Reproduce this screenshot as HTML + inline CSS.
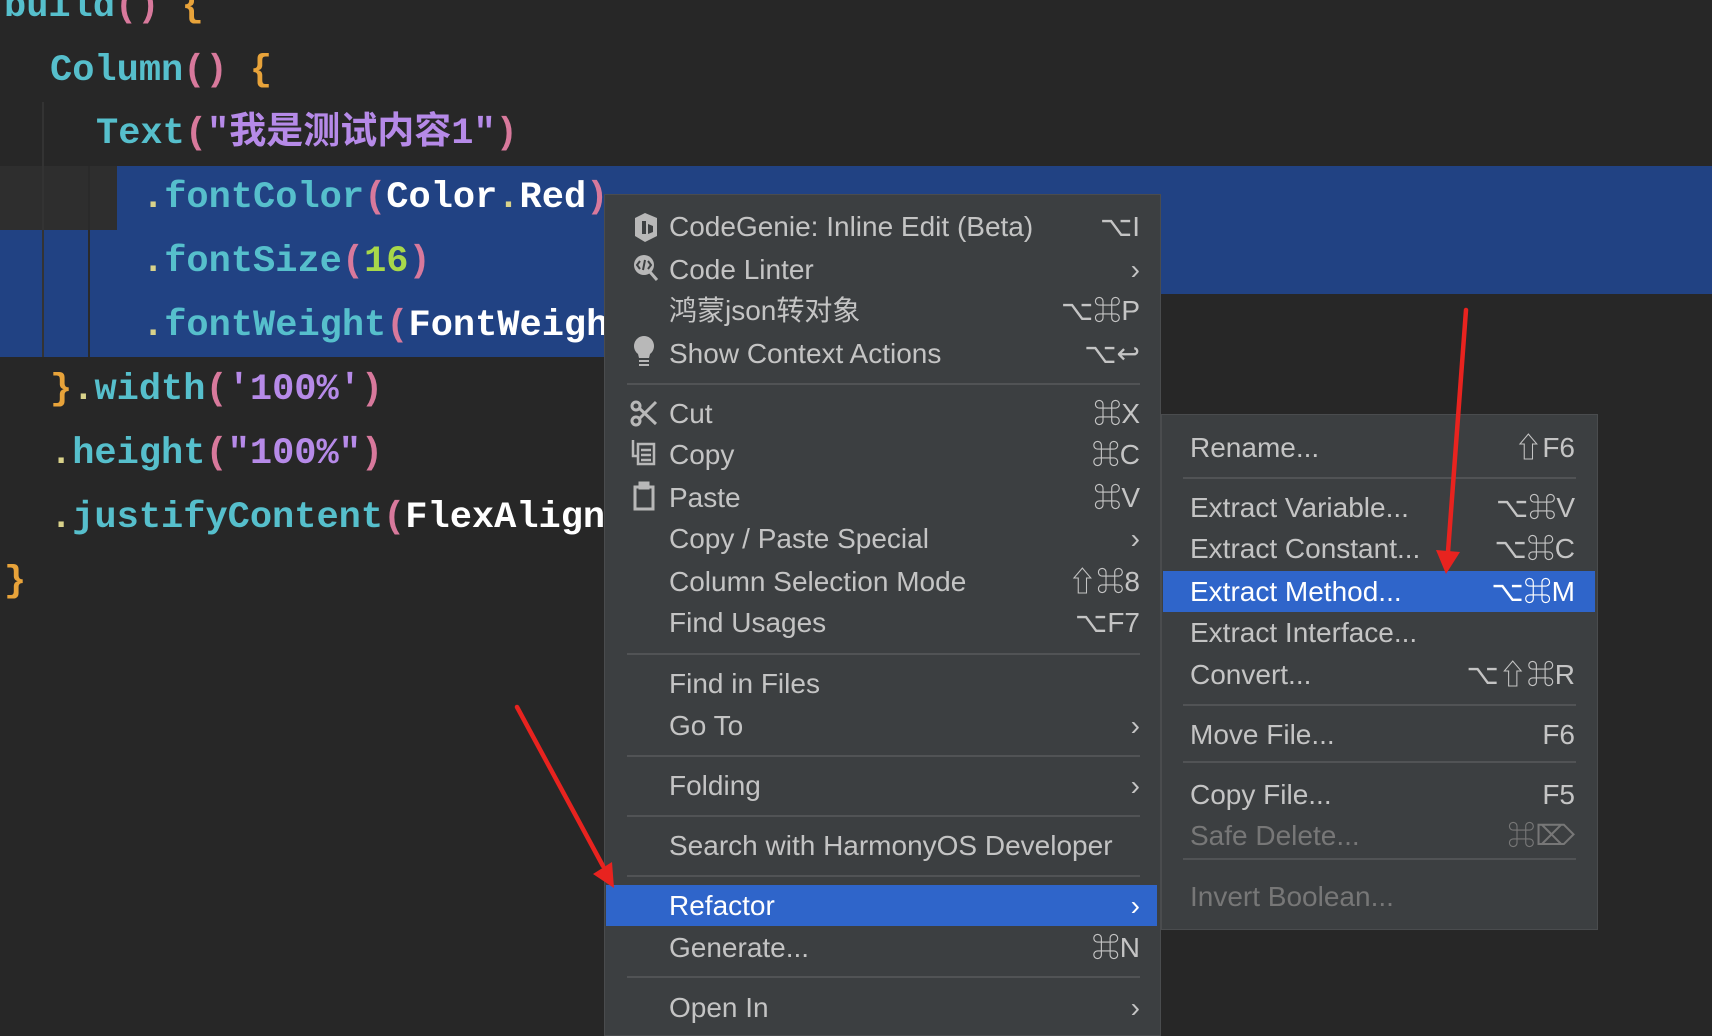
<!DOCTYPE html>
<html><head><meta charset="utf-8"><style>
*{margin:0;padding:0;box-sizing:border-box}
html,body{width:1712px;height:1036px;overflow:hidden;background:#272727}
.code{position:absolute;font-family:"Liberation Mono","Noto Sans CJK SC",monospace;font-size:37px;line-height:64px;white-space:pre;color:#56bfcc;font-weight:600}
.c{color:#56bfcc}.p{color:#d8799c}.o{color:#e8a33a}.s{color:#b68ae8}.n{color:#a8d84a}.w{color:#fff}.d{color:#d9d28a}
.menu{position:absolute;background:#3c3f41;font-family:"Liberation Sans","Noto Sans CJK SC",sans-serif;font-size:28px;color:#c4c4c4}
.it{position:absolute;left:0;right:0;height:40px;line-height:40px}
.it .t{position:absolute}
.it .k{position:absolute;text-align:right}
.sep{position:absolute;height:2px;background:#515355}
.hl{background:#2f65ca;color:#fff}
.dis{color:#777}
</style></head><body>
<div style="position:absolute;left:0;top:166px;width:117px;height:64px;background:#2e2e2e"></div>
<div style="position:absolute;left:117px;top:166px;width:1595px;height:64px;background:#214283"></div>
<div style="position:absolute;left:0;top:230px;width:1712px;height:64px;background:#214283"></div>
<div style="position:absolute;left:0;top:294px;width:604px;height:63px;background:#214283"></div>
<div style="position:absolute;left:42px;top:102px;width:2px;height:255px;background:#333"></div>
<div style="position:absolute;left:88px;top:166px;width:2px;height:191px;background:#2a2a2a"></div>

<div class="code" style="left:4px;top:-25px">build<span class="p">()</span> <span class="o">{</span></div>
<div class="code" style="left:50px;top:39px">Column<span class="p">()</span> <span class="o">{</span></div>
<div class="code" style="left:96px;top:102px">Text<span class="p">(</span><span class="s">"我是测试内容1"</span><span class="p">)</span></div>
<div class="code" style="left:142px;top:166px"><span class="d">.</span>fontColor<span class="p">(</span><span class="w">Color</span><span class="d">.</span><span class="w">Red</span><span class="p">)</span></div>
<div class="code" style="left:142px;top:230px"><span class="d">.</span>fontSize<span class="p">(</span><span class="n">16</span><span class="p">)</span></div>
<div class="code" style="left:142px;top:294px"><span class="d">.</span>fontWeight<span class="p">(</span><span class="w">FontWeight</span></div>
<div class="code" style="left:50px;top:358px"><span class="o">}</span><span class="d">.</span>width<span class="p">(</span><span class="s">'100%'</span><span class="p">)</span></div>
<div class="code" style="left:50px;top:422px"><span class="d">.</span>height<span class="p">(</span><span class="s">"100%"</span><span class="p">)</span></div>
<div class="code" style="left:50px;top:486px"><span class="d">.</span>justifyContent<span class="p">(</span><span class="w">FlexAlign</span></div>
<div class="code" style="left:4px;top:550px"><span class="o">}</span></div>

<div class="menu" style="left:604px;top:194px;width:557px;height:842px;border:1px solid #4a4c4e">
 <svg style="position:absolute;left:26px;top:17px" width="30" height="240" viewBox="0 0 30 240" fill="#b8b8b8">
  <path d="M4 6 L14 1 L26 6 L26 24 L14 30 L4 24Z M11 9 L11 22 L15 22 L15 9Z M17 12 L17 22 L22 20 L22 14Z" fill-rule="evenodd"/>
  <circle cx="13" cy="53" r="10" /><path d="M19 60 L26 68" stroke="#b8b8b8" stroke-width="3"/>
  <path d="M9 49 L6 53 L9 57 M17 49 L20 53 L17 57 M14 48 L12 58" stroke="#3c3f41" stroke-width="2" fill="none"/>
  <path d="M13 124 a10 10 0 0 1 6 18 l-1 4 h-10 l-1 -4 a10 10 0 0 1 6 -18z"/><rect x="8" y="148" width="10" height="2"/><rect x="8" y="152" width="10" height="2"/>
 </svg>
 <svg style="position:absolute;left:24px;top:203px" width="32" height="120" viewBox="0 0 32 120" fill="none" stroke="#b8b8b8" stroke-width="3">
  <circle cx="7" cy="8" r="4"/><circle cx="7" cy="23" r="4"/><path d="M10 10 L27 26 M10 21 L27 4"/>
  <path d="M4 42 v16 h4 M9 46 h16 v20 h-16z M12 52 h10 M12 57 h10 M12 62 h10" stroke-width="2.5"/>
  <rect x="6" y="89" width="18" height="22"/><rect x="11" y="85" width="8" height="5" fill="#b8b8b8"/>
 </svg>
 <div class="it" style="top:12px"><span class="t" style="left:64px">CodeGenie: Inline Edit (Beta)</span><span class="k" style="right:20px">⌥I</span></div>
 <div class="it" style="top:55px"><span class="t" style="left:64px">Code Linter</span><span class="k" style="right:20px">›</span></div>
 <div class="it" style="top:96px"><span class="t" style="left:64px">鸿蒙json转对象</span><span class="k" style="right:20px">⌥⌘P</span></div>
 <div class="it" style="top:139px"><span class="t" style="left:64px">Show Context Actions</span><span class="k" style="right:20px">⌥↩</span></div>
 <div class="sep" style="left:22px;right:20px;top:188px"></div>
 <div class="it" style="top:199px"><span class="t" style="left:64px">Cut</span><span class="k" style="right:20px">⌘X</span></div>
 <div class="it" style="top:240px"><span class="t" style="left:64px">Copy</span><span class="k" style="right:20px">⌘C</span></div>
 <div class="it" style="top:283px"><span class="t" style="left:64px">Paste</span><span class="k" style="right:20px">⌘V</span></div>
 <div class="it" style="top:324px"><span class="t" style="left:64px">Copy / Paste Special</span><span class="k" style="right:20px">›</span></div>
 <div class="it" style="top:367px"><span class="t" style="left:64px">Column Selection Mode</span><span class="k" style="right:20px">⇧⌘8</span></div>
 <div class="it" style="top:408px"><span class="t" style="left:64px">Find Usages</span><span class="k" style="right:20px">⌥F7</span></div>
 <div class="sep" style="left:22px;right:20px;top:458px"></div>
 <div class="it" style="top:469px"><span class="t" style="left:64px">Find in Files</span></div>
 <div class="it" style="top:511px"><span class="t" style="left:64px">Go To</span><span class="k" style="right:20px">›</span></div>
 <div class="sep" style="left:22px;right:20px;top:560px"></div>
 <div class="it" style="top:571px"><span class="t" style="left:64px">Folding</span><span class="k" style="right:20px">›</span></div>
 <div class="sep" style="left:22px;right:20px;top:620px"></div>
 <div class="it" style="top:631px"><span class="t" style="left:64px">Search with HarmonyOS Developer</span></div>
 <div class="sep" style="left:22px;right:20px;top:680px"></div>
 <div class="it hl" style="top:690px;left:1px;right:3px;height:41px;line-height:41px"><span class="t" style="left:63px">Refactor</span><span class="k" style="right:17px">›</span></div>
 <div class="it" style="top:733px"><span class="t" style="left:64px">Generate...</span><span class="k" style="right:20px">⌘N</span></div>
 <div class="sep" style="left:22px;right:20px;top:781px"></div>
 <div class="it" style="top:793px"><span class="t" style="left:64px">Open In</span><span class="k" style="right:20px">›</span></div>
</div>

<div class="menu" style="left:1161px;top:414px;width:437px;height:516px;border:1px solid #4a4c4e">
 <div class="it" style="top:13px"><span class="t" style="left:28px">Rename...</span><span class="k" style="right:22px">⇧F6</span></div>
 <div class="sep" style="left:21px;right:21px;top:62px"></div>
 <div class="it" style="top:73px"><span class="t" style="left:28px">Extract Variable...</span><span class="k" style="right:22px">⌥⌘V</span></div>
 <div class="it" style="top:114px"><span class="t" style="left:28px">Extract Constant...</span><span class="k" style="right:22px">⌥⌘C</span></div>
 <div class="it hl" style="top:156px;left:1px;right:2px;height:41px;line-height:41px"><span class="t" style="left:27px">Extract Method...</span><span class="k" style="right:20px">⌥⌘M</span></div>
 <div class="it" style="top:198px"><span class="t" style="left:28px">Extract Interface...</span></div>
 <div class="it" style="top:240px"><span class="t" style="left:28px">Convert...</span><span class="k" style="right:22px">⌥⇧⌘R</span></div>
 <div class="sep" style="left:21px;right:21px;top:289px"></div>
 <div class="it" style="top:300px"><span class="t" style="left:28px">Move File...</span><span class="k" style="right:22px">F6</span></div>
 <div class="sep" style="left:21px;right:21px;top:346px"></div>
 <div class="it" style="top:360px"><span class="t" style="left:28px">Copy File...</span><span class="k" style="right:22px">F5</span></div>
 <div class="it dis" style="top:401px"><span class="t" style="left:28px">Safe Delete...</span><span class="k" style="right:22px">⌘⌦</span></div>
 <div class="sep" style="left:21px;right:21px;top:443px"></div>
 <div class="it dis" style="top:462px"><span class="t" style="left:28px">Invert Boolean...</span></div>
</div>

<svg style="position:absolute;left:0;top:0" width="1712" height="1036">
 <line x1="1466" y1="310" x2="1448" y2="552" stroke="#e8231f" stroke-width="4.5" stroke-linecap="round"/>
 <polygon points="1436,550 1460,552 1446,574" fill="#e8231f"/>
 <line x1="517" y1="707" x2="603" y2="866" stroke="#e8231f" stroke-width="4.5" stroke-linecap="round"/>
 <polygon points="593,874 612,862 614,888" fill="#e8231f"/>
</svg>
</body></html>
